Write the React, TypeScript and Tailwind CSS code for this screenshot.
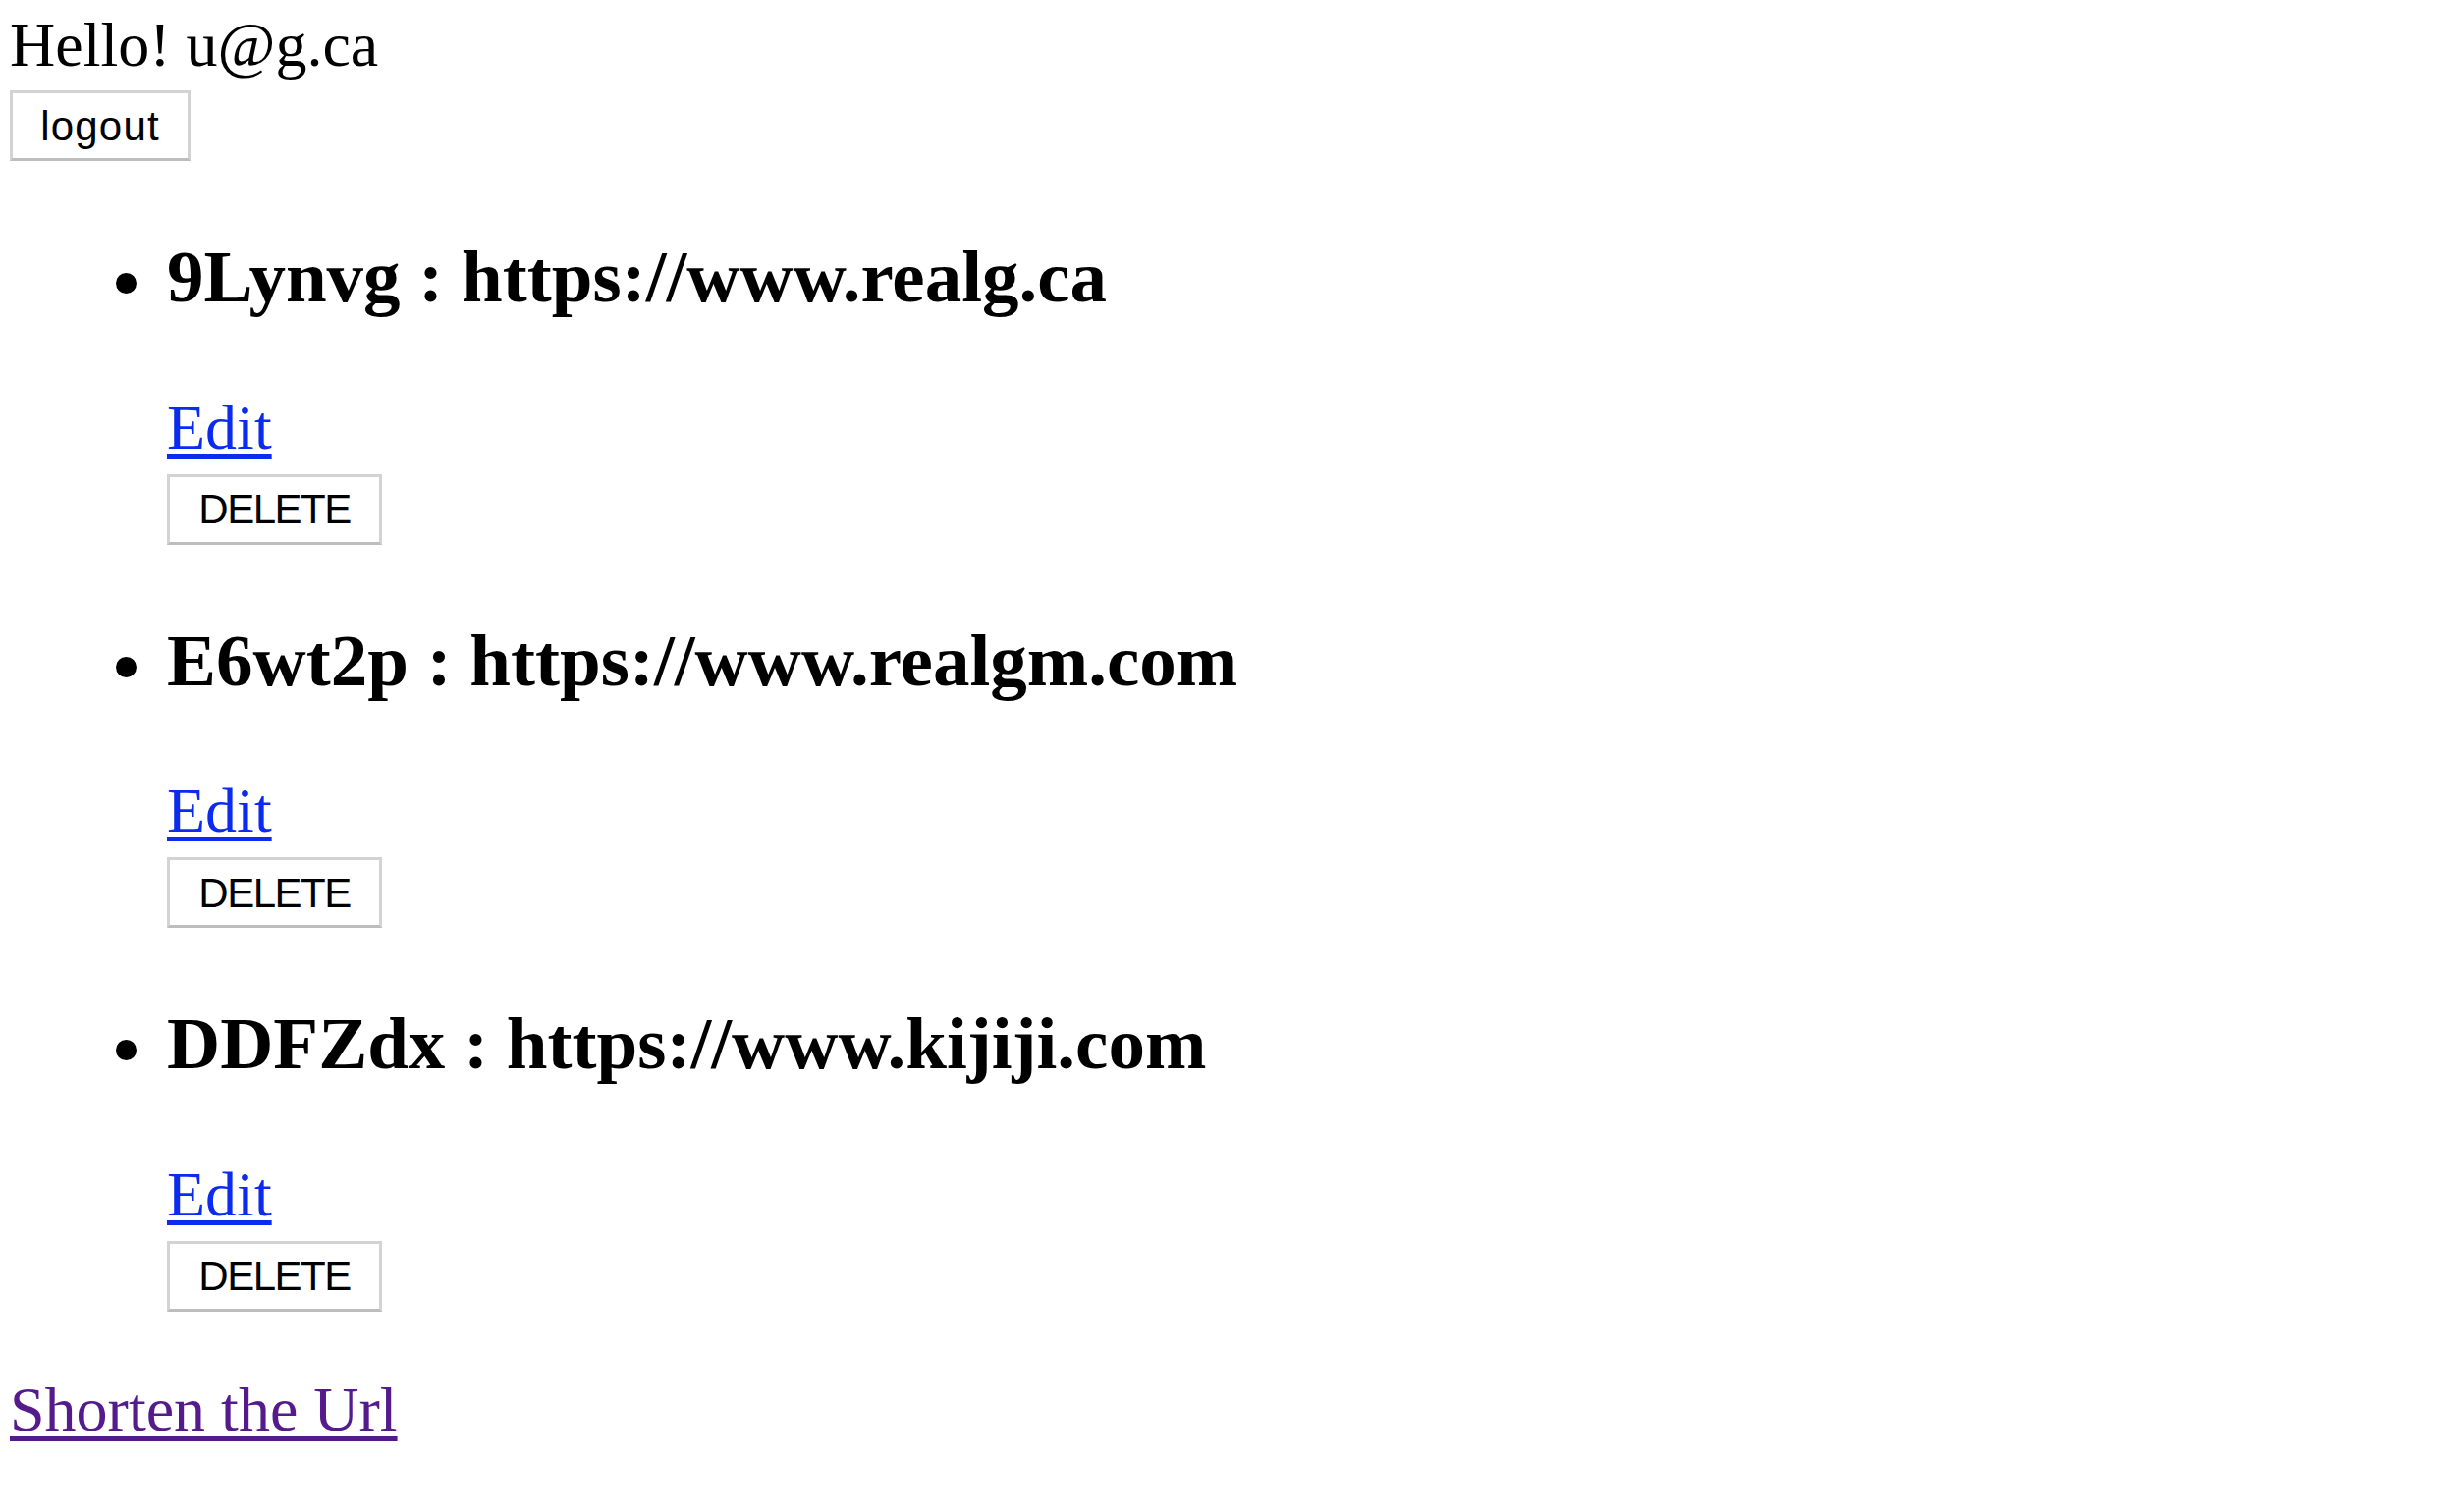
import type { FC } from "react";

interface ShortUrl {
  id: string;
  longUrl: string;
}

const urls: ShortUrl[] = [
  { id: "9Lynvg", longUrl: "https://www.realg.ca" },
  { id: "E6wt2p", longUrl: "https://www.realgm.com" },
  { id: "DDFZdx", longUrl: "https://www.kijiji.com" },
];

const buttonClass =
  "flex h-[72px] items-center justify-center border-[3px] border-[#d3d3d3] border-b-[#bdbdbd] bg-white font-['Liberation_Sans',Arial,sans-serif] text-[42px] text-black";

const UrlRow: FC<{ url: ShortUrl }> = ({ url }) => {
  return (
    <li className="pt-[75px]">
      <div className="-ml-[52px] flex items-start">
        <span className="mt-[39px] block h-[21px] w-[21px] shrink-0 rounded-full bg-black" />
        <h1 className="ml-[31px] text-[75px] leading-[86px] font-bold whitespace-nowrap">
          {url.id} : {url.longUrl}
        </h1>
      </div>
      <div className="mt-[73.5px] text-[64px] leading-[74px]">
        <a
          href={`/urls/${url.id}`}
          className="text-[#0b2cf0] underline decoration-[length:5px] underline-offset-[5px]"
        >
          Edit
        </a>
      </div>
      <button className={`${buttonClass} mt-[10px] w-[219px] tracking-[-1.5px]`}>
        DELETE
      </button>
    </li>
  );
};

export default function App() {
  return (
    <div className="min-h-[1540px] bg-white pt-[9px] pl-[10px] font-['Liberation_Serif','Times_New_Roman',serif] text-black">
      <p className="text-[64px] leading-[74px] whitespace-nowrap">Hello! u@g.ca</p>
      <button className={`${buttonClass} mt-[9px] w-[184px] tracking-[1.2px]`}>
        logout
      </button>

      <ul className="pl-[160px]">
        {urls.map((url) => (
          <UrlRow key={url.id} url={url} />
        ))}
      </ul>

      <div className="mt-[63px] text-[64px] leading-[74px]">
        <a
          href="/urls/new"
          className="text-[#551a8b] underline decoration-[length:5px] underline-offset-[6px]"
        >
          Shorten the Url
        </a>
      </div>
    </div>
  );
}
